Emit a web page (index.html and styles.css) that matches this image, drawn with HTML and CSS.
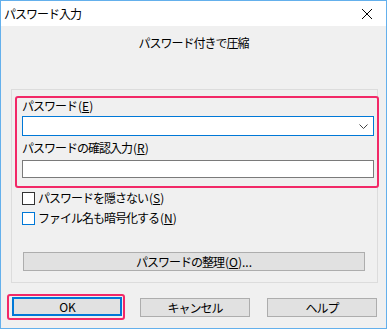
FILE: index.html
```html
<!DOCTYPE html>
<html lang="ja">
  <head>
    <meta charset="utf-8" />
    <title>パスワード入力</title>
    <link rel="stylesheet" href="styles.css">
  </head>
<body>

<div class="window">
  <div class="titlebar">
    <span class="title">パスワード入力</span>
    <svg class="close" width="10" height="10" viewBox="0 0 10 10"><path d="M0 0L10 10M10 0L0 10" stroke="#000" stroke-width="1" /></svg>
  </div>

  <div class="client">
    <div class="heading">パスワード付きで圧縮</div>

    <div class="group">
      <div class="mark">
        <div class="label">パスワード<span class="key">(<u>E</u>)</span></div>
        <div class="combo">
          <svg class="chevron" width="9" height="5" viewBox="0 0 9 5"><path d="M0.5 0.5L4.5 4.5L8.5 0.5" fill="none" stroke="#444" stroke-width="1" /></svg>
        </div>
        <div class="label second">パスワードの確認入力<span class="key">(<u>R</u>)</span></div>
        <div class="edit"></div>
      </div>

      <div class="check"><span class="box"></span>パスワードを隠さない<span class="key">(<u>S</u>)</span></div>
      <div class="check"><span class="box focus"></span>ファイル名も暗号化する<span class="key">(<u>N</u>)</span></div>

      <div class="button wide">パスワードの整理<span class="key">(<u>O</u>)...</span></div>
    </div>

    <div class="buttons">
      <div class="mark-ok"><div class="button default"><span class="key">OK</span></div></div>
      <div class="button">キャンセル</div>
      <div class="button">ヘルプ</div>
    </div>
  </div>
</div>

</body>
</html>
```

FILE: styles.css
```css
    body {
        margin: 0;
        font-family: "Noto Sans CJK JP", "Noto Sans", sans-serif;
        font-size: 12px;
        letter-spacing: -1px;
        color: #000;
    }
    .key {
        letter-spacing: 0;
        margin-left: 1px;
    }
    .window {
        width: 385px;
        height: 327px;
        border: 1px solid #64b0ec;
        background: #f0f0f0;
    }
    .titlebar {
        height: 25px;
        background: #fff;
        display: flex;
        align-items: center;
        justify-content: space-between;
        padding: 0 14px 0 3px;
    }
    .title {
        line-height: 16px;
    }
    .heading {
        text-align: center;
        line-height: 16px;
        padding-top: 9px;
        margin-bottom: 38px;
    }
    .group {
        margin-left: 10px;
        width: 365px;
        border: 1px solid #dcdcdc;
        padding: 6px 0 11px 0;
    }
    .mark {
        margin-left: 3px;
        width: 352px;
        border: 2px solid #f22867;
        border-radius: 3px;
        padding: 0 3px 8px 5px;
    }
    .label {
        line-height: 16px;
        height: 16px;
    }
    .label.second {
        margin-top: 4px;
    }
    .combo {
        margin-top: 2px;
        height: 18px;
        border: 1px solid #0078d7;
        background: #fff;
        display: flex;
        align-items: center;
        justify-content: flex-end;
        padding-right: 5px;
    }
    .edit {
        margin-top: 4px;
        height: 16px;
        border: 1px solid #7a7a7a;
        background: #fff;
    }
    .check {
        display: flex;
        align-items: center;
        height: 20px;
        padding-left: 10px;
        line-height: 16px;
    }
    .check:first-of-type {
        margin-top: 2px;
    }
    .box {
        width: 11px;
        height: 11px;
        border: 1px solid #333;
        background: #fff;
        margin-right: 3px;
    }
    .box.focus {
        border-color: #0078d7;
    }
    .button {
        box-sizing: border-box;
        width: 110px;
        height: 19px;
        border: 1px solid #adadad;
        background: #e1e1e1;
        text-align: center;
        line-height: 17px;
    }
    .button.wide {
        width: 342px;
        margin: 24px 0 0 11px;
    }
    .button.default {
        border: 2px solid #0078d7;
        line-height: 15px;
    }
    .buttons {
        display: flex;
        align-items: center;
        gap: 17px;
        margin-top: 11px;
        padding-left: 6px;
    }
    .mark-ok {
        border: 2px solid #f22867;
        border-radius: 3px;
        padding: 1px 1px 2px 3px;
        margin-right: -2px;
    }
```
